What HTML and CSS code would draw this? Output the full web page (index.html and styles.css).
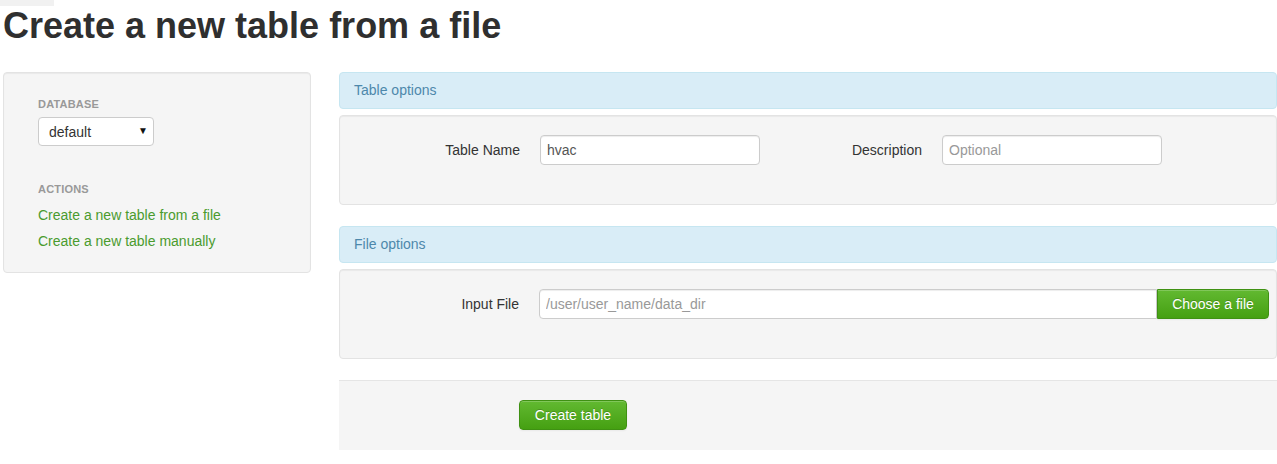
FILE: index.html
```html
<!DOCTYPE html>
<html lang="en">
<head>
<meta charset="utf-8">
<title>Create a new table from a file</title>
<link rel="stylesheet" href="styles.css">
</head>
<body>
<div class="page">
  <div class="top-stub"></div>
  <h1 class="title">Create a new table from a file</h1>
  <div class="layout">
    <aside class="sidebar">
      <ul class="nav-list">
        <li class="nav-header">Database</li>
        <li class="nav-select">
          <div class="select-wrap">
            <select class="db-select">
              <option>default</option>
            </select>
            <span class="caret">&#9660;</span>
          </div>
        </li>
        <li class="nav-header nav-header-gap">Actions</li>
        <li><a class="nav-link" href="#">Create a new table from a file</a></li>
        <li><a class="nav-link" href="#">Create a new table manually</a></li>
      </ul>
    </aside>
    <main class="main">
      <form class="form">
        <div class="section-head">Table options</div>
        <div class="section-body">
          <div class="row">
            <div class="group">
              <label class="control-label">Table Name</label>
              <input class="field field-short" type="text" value="hvac">
            </div>
            <div class="group">
              <label class="control-label">Description</label>
              <input class="field field-short" type="text" placeholder="Optional">
            </div>
          </div>
        </div>
        <div class="section-head">File options</div>
        <div class="section-body">
          <div class="row">
            <div class="group group-file">
              <label class="control-label">Input File</label>
              <div class="input-append">
                <input class="field field-long" type="text" placeholder="/user/user_name/data_dir">
                <button class="btn btn-green btn-append" type="button">Choose a file</button>
              </div>
            </div>
          </div>
        </div>
        <div class="form-actions">
          <button class="btn btn-green" type="button">Create table</button>
        </div>
      </form>
    </main>
  </div>
</div>
</body>
</html>
```

FILE: styles.css
```css
html, body {
  margin: 0;
  padding: 0;
  background: #ffffff;
  overflow: hidden;
}

body {
  font-family: "Liberation Sans", Arial, Helvetica, sans-serif;
  font-size: 14px;
  line-height: 20px;
  color: #333333;
}

.page {
  width: 1277px;
  padding-left: 3px;
  box-sizing: border-box;
}

.top-stub {
  width: 54px;
  height: 6px;
  margin-left: -3px;
  background: #f1f1f1;
}

.title {
  margin: 0;
  font-size: 36px;
  line-height: 40px;
  font-weight: bold;
  color: #2f2f2f;
  letter-spacing: 0;
}

.layout {
  display: flex;
  align-items: flex-start;
  gap: 28px;
  margin-top: 26px;
}

.sidebar {
  width: 308px;
  flex: none;
  box-sizing: border-box;
  background: #f5f5f5;
  border: 1px solid #e3e3e3;
  border-radius: 4px;
  box-shadow: inset 0 1px 1px rgba(0, 0, 0, 0.05);
  padding: 19px 19px 18px;
}

.nav-list {
  list-style: none;
  margin: 0;
  padding: 0 0 0 15px;
}

.nav-header {
  padding: 2px 0 3px;
  font-size: 11px;
  line-height: 20px;
  font-weight: bold;
  color: #999999;
  text-transform: uppercase;
  letter-spacing: 0.2px;
}

.nav-header-gap {
  margin-top: 31px;
}

.select-wrap {
  position: relative;
  width: 116px;
}

.db-select {
  display: block;
  width: 116px;
  height: 29px;
  margin: 0;
  padding: 0 0 0 10px;
  border: 1px solid #cccccc;
  border-radius: 4px;
  background: #ffffff;
  font-family: inherit;
  font-size: 14px;
  color: #333333;
  -webkit-appearance: none;
  appearance: none;
}

.caret {
  position: absolute;
  right: 6px;
  top: 8px;
  font-size: 10px;
  line-height: 12px;
  color: #111111;
  pointer-events: none;
}

.nav-link {
  display: block;
  padding: 3px 0;
  color: #4a9b2e;
  text-decoration: none;
}

.main {
  flex: 1;
  min-width: 0;
}

.form {
  margin: 0;
}

.section-head {
  box-sizing: border-box;
  height: 37px;
  padding: 7px 14px;
  background: #d9edf7;
  border: 1px solid #c6e6f1;
  border-radius: 4px;
  color: #4d88ab;
  margin-bottom: 6px;
}

.section-body {
  box-sizing: border-box;
  background: #f5f5f5;
  border: 1px solid #e3e3e3;
  border-radius: 4px;
  box-shadow: inset 0 1px 1px rgba(0, 0, 0, 0.05);
  padding: 19px 20px 39px;
  margin-bottom: 21px;
}

.row {
  display: flex;
  gap: 2px;
}

.group {
  display: flex;
  align-items: center;
}

.control-label {
  width: 160px;
  margin-right: 20px;
  text-align: right;
  color: #333333;
}

.group-file .control-label {
  width: 159px;
}

.field {
  box-sizing: border-box;
  height: 30px;
  margin: 0;
  padding: 4px 6px;
  border: 1px solid #cccccc;
  border-radius: 4px;
  background: #ffffff;
  box-shadow: inset 0 1px 1px rgba(0, 0, 0, 0.075);
  font-family: inherit;
  font-size: 14px;
  line-height: 20px;
  color: #555555;
}

.field::placeholder {
  color: #999999;
}

.field-short {
  width: 220px;
}

.input-append {
  display: flex;
}

.field-long {
  width: 618px;
  border-radius: 4px 0 0 4px;
}

.btn {
  box-sizing: border-box;
  height: 30px;
  padding: 4px 14px;
  border: 1px solid #3f9113;
  border-radius: 4px;
  background: linear-gradient(#62b931, #45a012);
  color: #ffffff;
  font-family: inherit;
  font-size: 14px;
  line-height: 20px;
  text-shadow: 0 -1px 0 rgba(0, 0, 0, 0.2);
  box-shadow: inset 0 1px 0 rgba(255, 255, 255, 0.2), 0 1px 2px rgba(0, 0, 0, 0.05);
  cursor: pointer;
}

.btn-append {
  width: 112px;
  padding: 4px 0;
  border-radius: 0 4px 4px 0;
}

.form-actions {
  box-sizing: border-box;
  height: 70px;
  padding: 19px 20px 20px 180px;
  background: #f5f5f5;
  border-top: 1px solid #e5e5e5;
}

.form-actions .btn {
  width: 108px;
  padding: 4px 0;
}
```
